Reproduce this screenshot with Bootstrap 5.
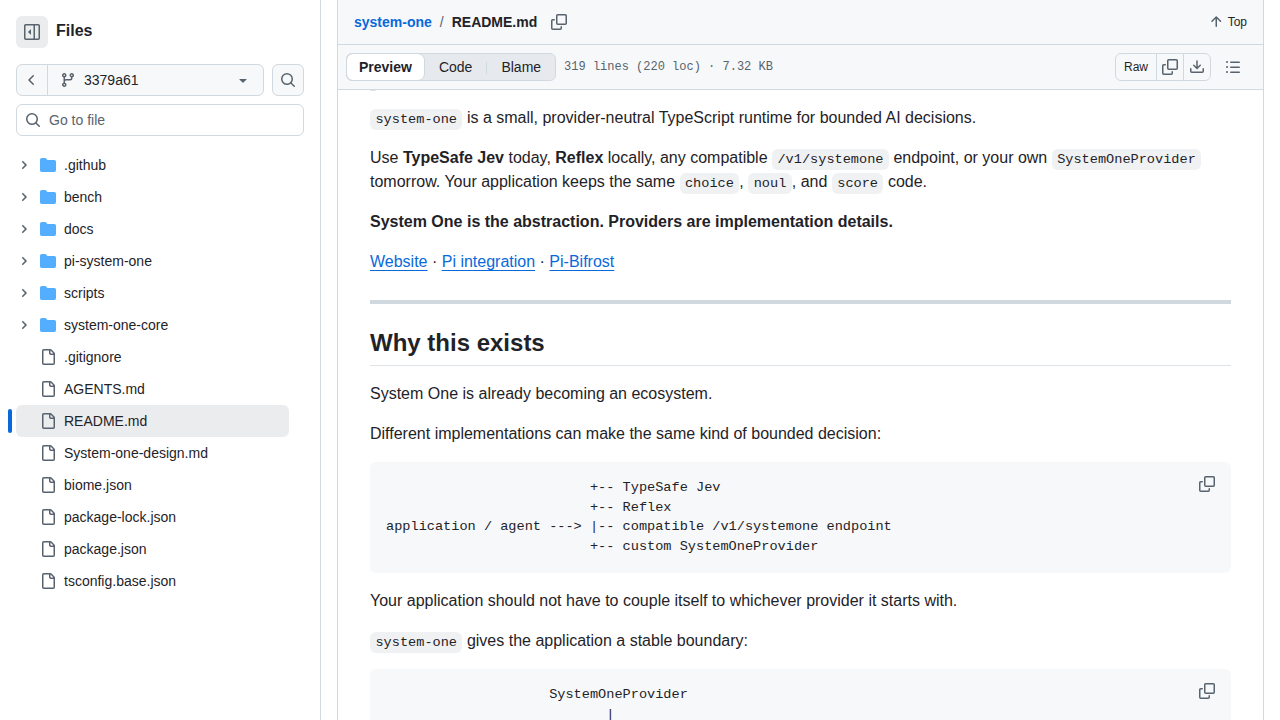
<!DOCTYPE html>
<html lang="en">
<head>
<meta charset="utf-8">
<meta name="viewport" content="width=device-width, initial-scale=1">
<title>system-one/README.md</title>
<link href="https://cdn.jsdelivr.net/npm/bootstrap@5.3.0/dist/css/bootstrap.min.css" rel="stylesheet">
<style>
:root{--line:#d1d9e0;--soft:#f6f8fa;--ink:#1f2328;--muted:#59636e;--accent:#0969da;--mono:"Liberation Mono",monospace}
body{font-family:"Liberation Sans",Arial,sans-serif;font-size:14px;line-height:20px;color:var(--ink);background:#fff}
svg{fill:currentColor;display:block;flex:none}
.line{border-color:var(--line)!important}
.soft{background:var(--soft)}
.muted{color:var(--muted)}
.repo-link{color:var(--accent)}
.sidebar{width:321px;border-right:1px solid var(--line)}
.sidebar h1{line-height:22px}
.tool{--bs-btn-padding-x:0;--bs-btn-padding-y:0;--bs-btn-font-size:14px;--bs-btn-line-height:20px;--bs-btn-border-color:var(--line);--bs-btn-border-radius:6px;--bs-btn-bg:var(--soft);--bs-btn-color:var(--muted);--bs-btn-hover-bg:#eff2f5;--bs-btn-hover-border-color:var(--line);display:flex;align-items:center;justify-content:center}
.square{width:32px;height:32px}
.toggle{background:#ebecee;--bs-btn-border-color:transparent}
.finder{border:1px solid var(--line);border-radius:6px;height:32px}
.finder input{font-size:14px;line-height:20px}
.finder input::placeholder{color:var(--muted);opacity:1}
.tree{padding-top:5px;margin-right:15px}
.tree-row{height:32px;color:var(--ink);text-decoration:none;border-radius:6px;position:relative}
.tree-row.current{background:#ebecee}
.tree-row.current::before{content:"";position:absolute;left:-8px;top:4px;width:4px;height:24px;border-radius:6px;background:var(--accent)}
.twist{width:16px;color:var(--muted)}
.folder{color:#54aeff}
.crumbs{height:45px}
.copy-path{margin-left:14px}
.bar{height:45px}
.segments{background:#e6eaef;border:1px solid var(--line);border-radius:6px;height:28px}
.seg{border:0;background:none;color:var(--ink);font-size:14px;line-height:20px;padding:0 14px 0 15px;position:relative}
.seg.on{background:#fff;border-radius:6px;font-weight:600;outline:1px solid var(--line);padding:0 12px}
.seg.split::before{content:"";position:absolute;left:0;top:8px;height:12px;border-left:1px solid var(--line)}
.info{font-family:var(--mono);font-size:12px}
.raw{--bs-btn-font-size:12px;height:28px}
.raw.txt{--bs-btn-color:var(--ink);width:42px}
.raw.ico{width:28px}
.doc{font-size:16px;line-height:24px;padding:0 32px}
.doc p{margin-bottom:16px}
.doc a{color:var(--accent);text-underline-offset:3px}
.doc hr{height:4px;border:0;margin:26px 0 24px;background:var(--line);opacity:1}
.doc h2{font-size:24px;line-height:30px;font-weight:600;padding-bottom:7px;margin-bottom:16px;border-bottom:1px solid #dfe4e9}
.doc code{font-family:var(--mono);font-size:85%;color:var(--ink)}
.doc p code{background:#eff1f3;border-radius:6px;padding:.2em .4em;line-height:1}
.doc pre{background:var(--soft);border-radius:6px;padding:16px;margin:0;line-height:1.45;font-size:85%;font-family:var(--mono)}
.doc pre code{font-size:100%}
.peek{width:6px;height:1px;margin-bottom:15px;background:#dde2e8;border-radius:0 0 4px 4px}
.snippet{position:relative;margin-bottom:16px}
.snippet button{position:absolute;top:8px;right:8px;width:32px;height:28px;padding:0;border:0;background:none;color:var(--muted)}
.snippet svg{margin:auto}
</style>
<script src="https://cdn.jsdelivr.net/npm/bootstrap@5.3.0/dist/js/bootstrap.bundle.min.js"></script>
</head>
<body>
<svg class="d-none" xmlns="http://www.w3.org/2000/svg">
<symbol id="copy" viewBox="0 0 16 16"><path d="M0 6.75C0 5.784.784 5 1.75 5h1.5a.75.75 0 0 1 0 1.5h-1.5a.25.25 0 0 0-.25.25v7.5c0 .138.112.25.25.25h7.5a.25.25 0 0 0 .25-.25v-1.5a.75.75 0 0 1 1.5 0v1.5A1.75 1.75 0 0 1 9.25 16h-7.5A1.75 1.75 0 0 1 0 14.25Z"/><path d="M5 1.75C5 .784 5.784 0 6.75 0h7.5C15.216 0 16 .784 16 1.75v7.5A1.75 1.75 0 0 1 14.25 11h-7.5A1.75 1.75 0 0 1 5 9.25Zm1.75-.25a.25.25 0 0 0-.25.25v7.5c0 .138.112.25.25.25h7.5a.25.25 0 0 0 .25-.25v-7.5a.25.25 0 0 0-.25-.25Z"/></symbol>
<symbol id="search" viewBox="0 0 16 16"><path d="M10.68 11.74a6 6 0 0 1-7.922-8.982 6 6 0 0 1 8.982 7.922l3.04 3.04a.749.749 0 0 1-.326 1.275.749.749 0 0 1-.734-.215ZM11.5 7a4.499 4.499 0 1 0-8.997 0A4.499 4.499 0 0 0 11.5 7Z"/></symbol>
<symbol id="panel" viewBox="0 0 16 16"><path d="m4.177 7.823 2.396-2.396A.25.25 0 0 1 7 5.604v4.792a.25.25 0 0 1-.427.177L4.177 8.177a.25.25 0 0 1 0-.354Z"/><path d="M0 1.75C0 .784.784 0 1.75 0h12.5C15.216 0 16 .784 16 1.75v12.5A1.75 1.75 0 0 1 14.25 16H1.75A1.75 1.75 0 0 1 0 14.25Zm1.75-.25a.25.25 0 0 0-.25.25v12.5c0 .138.112.25.25.25H9.5v-13Zm12.5 13a.25.25 0 0 0 .25-.25V1.75a.25.25 0 0 0-.25-.25H11v13Z"/></symbol>
<symbol id="back" viewBox="0 0 16 16"><path d="M9.78 12.78a.75.75 0 0 1-1.06 0L4.47 8.53a.75.75 0 0 1 0-1.06l4.25-4.25a.751.751 0 0 1 1.042.018.751.751 0 0 1 .018 1.042L6.06 8l3.72 3.72a.75.75 0 0 1 0 1.06Z"/></symbol>
<symbol id="branch" viewBox="0 0 16 16"><path d="M9.5 3.25a2.25 2.25 0 1 1 3 2.122V6A2.5 2.5 0 0 1 10 8.5H6a1 1 0 0 0-1 1v1.128a2.251 2.251 0 1 1-1.5 0V5.372a2.25 2.25 0 1 1 1.5 0v1.836A2.493 2.493 0 0 1 6 7h4a1 1 0 0 0 1-1v-.628A2.25 2.25 0 0 1 9.5 3.25Zm-6 0a.75.75 0 1 0 1.5 0 .75.75 0 0 0-1.5 0Zm8.25-.75a.75.75 0 1 0 0 1.5.75.75 0 0 0 0-1.5ZM4.25 12a.75.75 0 1 0 0 1.5.75.75 0 0 0 0-1.5Z"/></symbol>
<symbol id="caret" viewBox="0 0 16 16"><path d="m4.427 7.427 3.396 3.396a.25.25 0 0 0 .354 0l3.396-3.396A.25.25 0 0 0 11.396 7H4.604a.25.25 0 0 0-.177.427Z"/></symbol>
<symbol id="twist" viewBox="0 0 12 12"><path d="M4.7 10c-.2 0-.4-.1-.5-.2-.3-.3-.3-.8 0-1.1L6.9 6 4.2 3.3c-.3-.3-.3-.8 0-1.1.3-.3.8-.3 1.1 0l3.3 3.2c.3.3.3.8 0 1.1L5.3 9.7c-.2.2-.4.3-.6.3Z"/></symbol>
<symbol id="folder" viewBox="0 0 16 16"><path d="M1.75 1A1.75 1.75 0 0 0 0 2.75v10.5C0 14.216.784 15 1.75 15h12.5A1.75 1.75 0 0 0 16 13.25v-8.5A1.75 1.75 0 0 0 14.25 3H7.5a.25.25 0 0 1-.2-.1l-.9-1.2C6.07 1.26 5.55 1 5 1H1.75Z"/></symbol>
<symbol id="file" viewBox="0 0 16 16"><path d="M2 1.75C2 .784 2.784 0 3.75 0h6.586c.464 0 .909.184 1.237.513l2.914 2.914c.329.328.513.773.513 1.237v9.586A1.75 1.75 0 0 1 13.25 16h-9.5A1.75 1.75 0 0 1 2 14.25Zm1.75-.25a.25.25 0 0 0-.25.25v12.5c0 .138.112.25.25.25h9.5a.25.25 0 0 0 .25-.25V6h-2.75A1.75 1.75 0 0 1 9 4.25V1.5Zm6.75.062V4.25c0 .138.112.25.25.25h2.688l-.011-.013-2.914-2.914-.013-.011Z"/></symbol>
<symbol id="up" viewBox="0 0 16 16"><path d="M3.47 7.78a.75.75 0 0 1 0-1.06l4.25-4.25a.75.75 0 0 1 1.06 0l4.25 4.25a.751.751 0 0 1-.018 1.042.751.751 0 0 1-1.042.018L9 4.81v7.44a.75.75 0 0 1-1.5 0V4.81L4.53 7.78a.75.75 0 0 1-1.06 0Z"/></symbol>
<symbol id="download" viewBox="0 0 16 16"><path d="M2.75 14A1.75 1.75 0 0 1 1 12.25v-2.5a.75.75 0 0 1 1.5 0v2.5c0 .138.112.25.25.25h10.5a.25.25 0 0 0 .25-.25v-2.5a.75.75 0 0 1 1.5 0v2.5A1.75 1.75 0 0 1 13.25 14Z"/><path d="M7.25 7.689V2a.75.75 0 0 1 1.5 0v5.689l1.97-1.969a.749.749 0 1 1 1.06 1.06l-3.25 3.25a.749.749 0 0 1-1.06 0L4.22 6.78a.749.749 0 1 1 1.06-1.06l1.97 1.969Z"/></symbol>
<symbol id="list" viewBox="0 0 16 16"><path d="M5.75 2.5h8.5a.75.75 0 0 1 0 1.5h-8.5a.75.75 0 0 1 0-1.5Zm0 5h8.5a.75.75 0 0 1 0 1.5h-8.5a.75.75 0 0 1 0-1.5Zm0 5h8.5a.75.75 0 0 1 0 1.5h-8.5a.75.75 0 0 1 0-1.5ZM2 14a1 1 0 1 1 0-2 1 1 0 0 1 0 2Zm1-6a1 1 0 1 1-2 0 1 1 0 0 1 2 0ZM2 4a1 1 0 1 1 0-2 1 1 0 0 1 0 2Z"/></symbol>
</svg>

<div class="d-flex vh-100 overflow-hidden">
  <aside class="sidebar flex-shrink-0 overflow-hidden px-3 pt-3">
    <div class="d-flex gap-2 mb-3">
      <button class="btn tool toggle square" aria-label="Collapse file tree"><svg width="16" height="16"><use href="#panel"/></svg></button>
      <h1 class="fs-6 fw-bold mb-0 mt-1">Files</h1>
    </div>
    <div class="d-flex gap-2 mb-2">
      <div class="btn-group flex-fill">
        <button class="btn tool square flex-grow-0" aria-label="Back"><svg width="16" height="16"><use href="#back"/></svg></button>
        <button class="btn tool justify-content-start px-2 gap-2"><span class="ps-1"><svg width="16" height="16"><use href="#branch"/></svg></span><span class="text-dark flex-fill text-start">3379a61</span><span class="pe-1"><svg width="16" height="16"><use href="#caret"/></svg></span></button>
      </div>
      <button class="btn tool square" aria-label="Search this repository"><svg width="16" height="16"><use href="#search"/></svg></button>
    </div>
    <label class="finder d-flex align-items-center gap-2 px-2 mb-2 muted"><svg width="16" height="16"><use href="#search"/></svg><input class="border-0 p-0 flex-fill" type="text" placeholder="Go to file" aria-label="Go to file"></label>
    <nav class="tree" aria-label="File tree">
      <a href="#" class="tree-row d-flex align-items-center gap-2"><span class="twist"><svg class="ms-auto me-auto" width="12" height="12"><use href="#twist"/></svg></span><svg class="folder" width="16" height="16"><use href="#folder"/></svg>.github</a>
      <a href="#" class="tree-row d-flex align-items-center gap-2"><span class="twist"><svg class="ms-auto me-auto" width="12" height="12"><use href="#twist"/></svg></span><svg class="folder" width="16" height="16"><use href="#folder"/></svg>bench</a>
      <a href="#" class="tree-row d-flex align-items-center gap-2"><span class="twist"><svg class="ms-auto me-auto" width="12" height="12"><use href="#twist"/></svg></span><svg class="folder" width="16" height="16"><use href="#folder"/></svg>docs</a>
      <a href="#" class="tree-row d-flex align-items-center gap-2"><span class="twist"><svg class="ms-auto me-auto" width="12" height="12"><use href="#twist"/></svg></span><svg class="folder" width="16" height="16"><use href="#folder"/></svg>pi-system-one</a>
      <a href="#" class="tree-row d-flex align-items-center gap-2"><span class="twist"><svg class="ms-auto me-auto" width="12" height="12"><use href="#twist"/></svg></span><svg class="folder" width="16" height="16"><use href="#folder"/></svg>scripts</a>
      <a href="#" class="tree-row d-flex align-items-center gap-2"><span class="twist"><svg class="ms-auto me-auto" width="12" height="12"><use href="#twist"/></svg></span><svg class="folder" width="16" height="16"><use href="#folder"/></svg>system-one-core</a>
      <a href="#" class="tree-row d-flex align-items-center gap-2"><span class="twist"></span><svg class="muted" width="16" height="16"><use href="#file"/></svg>.gitignore</a>
      <a href="#" class="tree-row d-flex align-items-center gap-2"><span class="twist"></span><svg class="muted" width="16" height="16"><use href="#file"/></svg>AGENTS.md</a>
      <a href="#" class="tree-row current d-flex align-items-center gap-2" aria-current="page"><span class="twist"></span><svg class="muted" width="16" height="16"><use href="#file"/></svg>README.md</a>
      <a href="#" class="tree-row d-flex align-items-center gap-2"><span class="twist"></span><svg class="muted" width="16" height="16"><use href="#file"/></svg>System-one-design.md</a>
      <a href="#" class="tree-row d-flex align-items-center gap-2"><span class="twist"></span><svg class="muted" width="16" height="16"><use href="#file"/></svg>biome.json</a>
      <a href="#" class="tree-row d-flex align-items-center gap-2"><span class="twist"></span><svg class="muted" width="16" height="16"><use href="#file"/></svg>package-lock.json</a>
      <a href="#" class="tree-row d-flex align-items-center gap-2"><span class="twist"></span><svg class="muted" width="16" height="16"><use href="#file"/></svg>package.json</a>
      <a href="#" class="tree-row d-flex align-items-center gap-2"><span class="twist"></span><svg class="muted" width="16" height="16"><use href="#file"/></svg>tsconfig.base.json</a>
    </nav>
  </aside>

  <main class="flex-fill d-flex flex-column mx-3 border-start border-end line overflow-hidden">
    <header class="crumbs soft border-bottom line d-flex align-items-center px-3 flex-shrink-0">
      <a href="#" class="repo-link fw-bold text-decoration-none">system-one</a><span class="muted px-2">/</span><strong>README.md</strong>
      <button class="btn p-0 border-0 muted copy-path" aria-label="Copy path"><svg width="16" height="16"><use href="#copy"/></svg></button>
      <button class="btn tool border-0 gap-1 ms-auto raw"><svg width="16" height="16"><use href="#up"/></svg><span class="text-dark">Top</span></button>
    </header>
    <div class="bar soft border-bottom line d-flex align-items-center px-2 flex-shrink-0">
      <div class="segments d-flex" role="group" aria-label="File view"><button class="seg on">Preview</button><button class="seg">Code</button><button class="seg split">Blame</button></div>
      <span class="info muted ms-2">319 lines (220 loc) · 7.32 KB</span>
      <div class="btn-group ms-auto">
        <button class="btn tool raw txt">Raw</button>
        <button class="btn tool raw ico" aria-label="Copy raw file"><svg width="16" height="16"><use href="#copy"/></svg></button>
        <button class="btn tool raw ico" aria-label="Download raw file"><svg width="16" height="16"><use href="#download"/></svg></button>
      </div>
      <button class="btn tool raw ico border-0 ms-2 me-2" aria-label="Outline"><svg width="16" height="16"><use href="#list"/></svg></button>
    </div>
    <article class="doc flex-fill overflow-hidden">
      <div class="peek"></div>
      <p><code>system-one</code> is a small, provider-neutral TypeScript runtime for bounded AI decisions.</p>
      <p>Use <strong>TypeSafe Jev</strong> today, <strong>Reflex</strong> locally, any compatible <code>/v1/systemone</code> endpoint, or your own <code>SystemOneProvider</code> tomorrow. Your application keeps the same <code>choice</code>, <code>noul</code>, and <code>score</code> code.</p>
      <p><strong>System One is the abstraction. Providers are implementation details.</strong></p>
      <p><a href="#">Website</a> · <a href="#">Pi integration</a> · <a href="#">Pi-Bifrost</a></p>
      <hr>
      <h2>Why this exists</h2>
      <p>System One is already becoming an ecosystem.</p>
      <p>Different implementations can make the same kind of bounded decision:</p>
      <div class="snippet"><pre><code>                         +-- TypeSafe Jev
                         +-- Reflex
application / agent ---&gt; |-- compatible /v1/systemone endpoint
                         +-- custom SystemOneProvider</code></pre><button aria-label="Copy"><svg width="16" height="16"><use href="#copy"/></svg></button></div>
      <p>Your application should not have to couple itself to whichever provider it starts with.</p>
      <p><code>system-one</code> gives the application a stable boundary:</p>
      <div class="snippet"><pre><code>                    SystemOneProvider
                           |</code></pre><button aria-label="Copy"><svg width="16" height="16"><use href="#copy"/></svg></button></div>
    </article>
  </main>
</div>
</body>
</html>
